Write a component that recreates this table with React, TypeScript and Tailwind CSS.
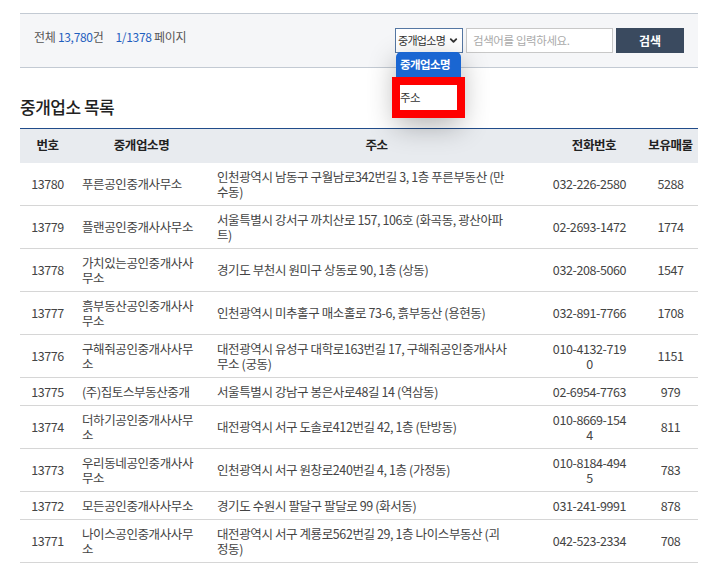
import { ChevronDown } from "lucide-react";

type Row = {
	no: number;
	name: string;
	addr: string;
	tel: string;
	count: number;
};

const rows: Row[] = [
	{ no: 13780, name: "푸른공인중개사무소", addr: "인천광역시 남동구 구월남로342번길 3, 1층 푸른부동산 (만수동)", tel: "032-226-2580", count: 5288 },
	{ no: 13779, name: "플랜공인중개사사무소", addr: "서울특별시 강서구 까치산로 157, 106호 (화곡동, 광산아파트)", tel: "02-2693-1472", count: 1774 },
	{ no: 13778, name: "가치있는공인중개사사무소", addr: "경기도 부천시 원미구 상동로 90, 1층 (상동)", tel: "032-208-5060", count: 1547 },
	{ no: 13777, name: "흙부동산공인중개사사무소", addr: "인천광역시 미추홀구 매소홀로 73-6, 흙부동산 (용현동)", tel: "032-891-7766", count: 1708 },
	{ no: 13776, name: "구해줘공인중개사사무소", addr: "대전광역시 유성구 대학로163번길 17, 구해줘공인중개사사무소 (궁동)", tel: "010-4132-7190", count: 1151 },
	{ no: 13775, name: "(주)집토스부동산중개", addr: "서울특별시 강남구 봉은사로48길 14 (역삼동)", tel: "02-6954-7763", count: 979 },
	{ no: 13774, name: "더하기공인중개사사무소", addr: "대전광역시 서구 도솔로412번길 42, 1층 (탄방동)", tel: "010-8669-1544", count: 811 },
	{ no: 13773, name: "우리동네공인중개사사무소", addr: "인천광역시 서구 원창로240번길 4, 1층 (가정동)", tel: "010-8184-4945", count: 783 },
	{ no: 13772, name: "모든공인중개사사무소", addr: "경기도 수원시 팔달구 팔달로 99 (화서동)", tel: "031-241-9991", count: 878 },
	{ no: 13771, name: "나이스공인중개사사무소", addr: "대전광역시 서구 계룡로562번길 29, 1층 나이스부동산 (괴정동)", tel: "042-523-2334", count: 708 },
];

export default function App() {
	return (
		<div className="min-h-[571px] bg-white font-['Noto_Sans_CJK_KR','Noto_Sans',sans-serif] text-[#444]">
			<div className="ml-[20px] w-[678px] pt-[13px]">
				{/* Search bar */}
				<div className="flex h-[55px] items-start justify-between border-y border-[#c3cad3] bg-[#f5f6f8] px-[14px] pt-[14px]">
					<p className="text-[12px] leading-[18px] tracking-[-0.3px] text-[#555]">
						전체 <span className="text-[#1f5fbf]">13,780</span>건
						<span className="ml-[12px] text-[#1f5fbf]">1/1378</span> 페이지
					</p>
					<div className="flex gap-[3px]">
						<div className="relative">
							<div className="flex h-[25px] w-[68px] items-center justify-between whitespace-nowrap border border-[#5577a3] bg-white pl-[2px] pr-[3px] text-[11px] tracking-[-0.7px] text-[#333]">
								<span>중개업소명</span>
								<ChevronDown size={11} strokeWidth={4} className="shrink-0 text-[#333]" />
							</div>
							{/* open select list */}
							<div className="absolute left-[1px] top-[24px] z-10 w-[65px] shadow-[0_8px_28px_rgba(0,0,0,0.3)]">
								<div className="flex h-[25px] items-center whitespace-nowrap rounded-t-[5px] bg-[#1a66d2] pl-[4px] text-[11.5px] font-bold tracking-[-0.6px] text-white">
									중개업소명
								</div>
								<div className="flex h-[41px] items-center bg-white pl-[4px] text-[11.5px] tracking-[-0.6px] text-[#333]">
									주소
								</div>
							</div>
							{/* highlight */}
							<div className="absolute left-[-3px] top-[49px] z-20 h-[41px] w-[73px] border-[8px] border-[#ff0000]" />
						</div>
						<div className="flex h-[25px] w-[147px] items-center border border-[#c8c8c8] bg-white px-[6px] text-[11.5px] tracking-[-0.4px] text-[#aaa]">
							검색어를 입력하세요.
						</div>
						<button className="h-[25px] w-[68px] bg-[#3a4a5f] text-[12px] font-bold text-white">검색</button>
					</div>
				</div>

				<h2 className="mb-[9px] mt-[27px] text-[17px] font-medium leading-[24px] tracking-[-0.5px] text-[#222]">중개업소 목록</h2>

				{/* List */}
				<table className="w-[678px] table-fixed border-collapse border-t border-[#214c8a] text-[12.5px] tracking-[-0.4px]">
					<colgroup>
						<col className="w-[55px]" />
						<col className="w-[133px]" />
						<col className="w-[337px]" />
						<col className="w-[98px]" />
						<col className="w-[55px]" />
					</colgroup>
					<thead>
						<tr className="h-[34px] bg-[#e8ebef] font-bold text-[#222]">
							<th className="font-bold">번호</th>
							<th className="font-bold">중개업소명</th>
							<th className="font-bold">주소</th>
							<th className="font-bold">전화번호</th>
							<th className="whitespace-nowrap font-bold">보유매물</th>
						</tr>
					</thead>
					<tbody>
						{rows.map((r) => (
							<tr key={r.no} className="border-b border-[#d6d6d6] leading-[15px]">
								<td className="py-[6px] text-center">{r.no}</td>
								<td className="py-[6px] pl-[7px] pr-[8px]">{r.name}</td>
								<td className="py-[6px] pl-[9px] pr-[38px]">{r.addr}</td>
								<td className="py-[6px] pl-[5px] pr-[14px] text-center break-all">{r.tel}</td>
								<td className="py-[6px] text-center">{r.count}</td>
							</tr>
						))}
					</tbody>
				</table>
			</div>
		</div>
	);
}
